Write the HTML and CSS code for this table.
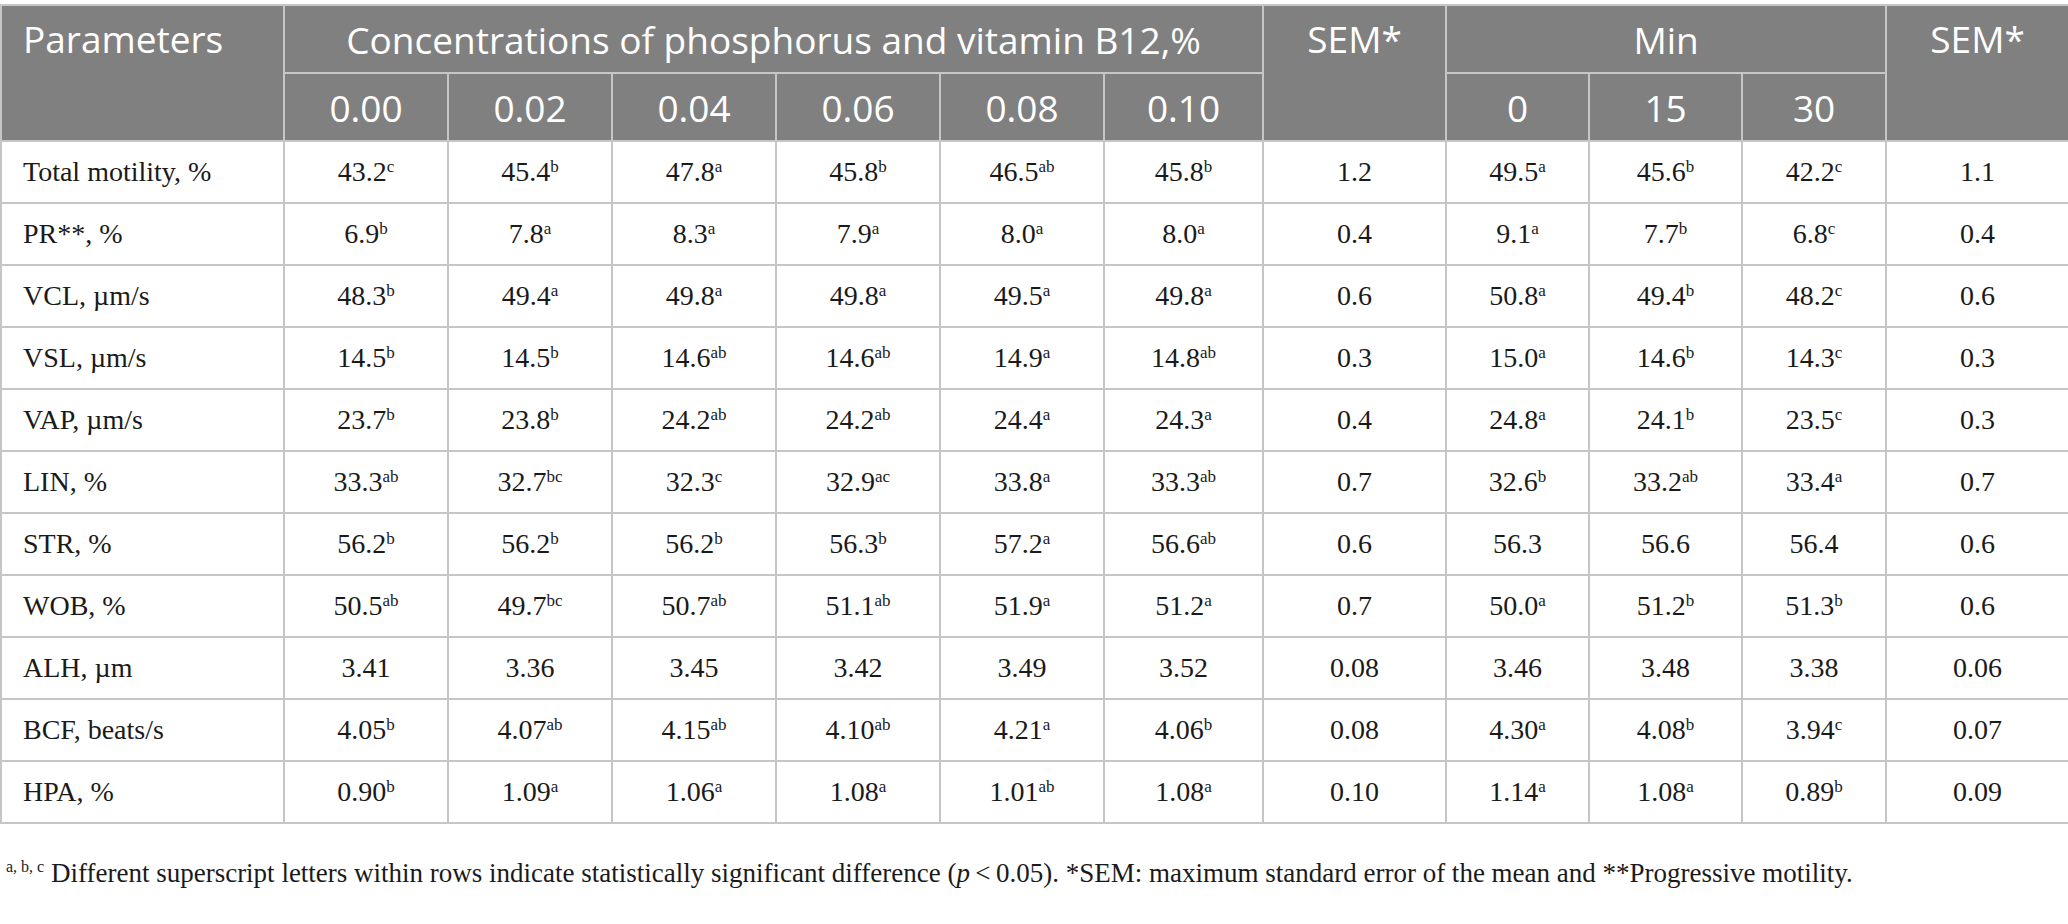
FILE: index.html
```html
<!DOCTYPE html>
<html lang="en">

<head>
    <meta charset="UTF-8">
    <meta name="viewport" content="width=device-width, initial-scale=1.0">
    <title>Sperm motility parameters</title>
    <link rel="stylesheet" href="styles.css">
</head>

<body>
    <table class="data">
        <colgroup>
            <col class="c-param">
            <col class="c-num"><col class="c-num"><col class="c-num">
            <col class="c-num"><col class="c-num"><col class="c-last">
            <col class="c-sem">
            <col class="c-m0"><col class="c-m15"><col class="c-m30">
            <col class="c-sem">
        </colgroup>
        <thead>
            <tr class="head-top">
                <th rowspan="2" class="left top">Parameters</th>
                <th colspan="6">Concentrations of phosphorus and vitamin B12,%</th>
                <th rowspan="2" class="top">SEM*</th>
                <th colspan="3">Min</th>
                <th rowspan="2" class="top">SEM*</th>
            </tr>
            <tr class="head-sub">
                <th>0.00</th>
                <th>0.02</th>
                <th>0.04</th>
                <th>0.06</th>
                <th>0.08</th>
                <th>0.10</th>
                <th>0</th>
                <th>15</th>
                <th>30</th>
            </tr>
        </thead>
        <tbody>
            <tr>
                <td class="left">Total motility, %</td>
                <td>43.2<sup>c</sup></td><td>45.4<sup>b</sup></td><td>47.8<sup>a</sup></td>
                <td>45.8<sup>b</sup></td><td>46.5<sup>ab</sup></td><td>45.8<sup>b</sup></td>
                <td>1.2</td>
                <td>49.5<sup>a</sup></td><td>45.6<sup>b</sup></td><td>42.2<sup>c</sup></td>
                <td>1.1</td>
            </tr>
            <tr>
                <td class="left">PR**, %</td>
                <td>6.9<sup>b</sup></td><td>7.8<sup>a</sup></td><td>8.3<sup>a</sup></td>
                <td>7.9<sup>a</sup></td><td>8.0<sup>a</sup></td><td>8.0<sup>a</sup></td>
                <td>0.4</td>
                <td>9.1<sup>a</sup></td><td>7.7<sup>b</sup></td><td>6.8<sup>c</sup></td>
                <td>0.4</td>
            </tr>
            <tr>
                <td class="left">VCL, µm/s</td>
                <td>48.3<sup>b</sup></td><td>49.4<sup>a</sup></td><td>49.8<sup>a</sup></td>
                <td>49.8<sup>a</sup></td><td>49.5<sup>a</sup></td><td>49.8<sup>a</sup></td>
                <td>0.6</td>
                <td>50.8<sup>a</sup></td><td>49.4<sup>b</sup></td><td>48.2<sup>c</sup></td>
                <td>0.6</td>
            </tr>
            <tr>
                <td class="left">VSL, µm/s</td>
                <td>14.5<sup>b</sup></td><td>14.5<sup>b</sup></td><td>14.6<sup>ab</sup></td>
                <td>14.6<sup>ab</sup></td><td>14.9<sup>a</sup></td><td>14.8<sup>ab</sup></td>
                <td>0.3</td>
                <td>15.0<sup>a</sup></td><td>14.6<sup>b</sup></td><td>14.3<sup>c</sup></td>
                <td>0.3</td>
            </tr>
            <tr>
                <td class="left">VAP, µm/s</td>
                <td>23.7<sup>b</sup></td><td>23.8<sup>b</sup></td><td>24.2<sup>ab</sup></td>
                <td>24.2<sup>ab</sup></td><td>24.4<sup>a</sup></td><td>24.3<sup>a</sup></td>
                <td>0.4</td>
                <td>24.8<sup>a</sup></td><td>24.1<sup>b</sup></td><td>23.5<sup>c</sup></td>
                <td>0.3</td>
            </tr>
            <tr>
                <td class="left">LIN, %</td>
                <td>33.3<sup>ab</sup></td><td>32.7<sup>bc</sup></td><td>32.3<sup>c</sup></td>
                <td>32.9<sup>ac</sup></td><td>33.8<sup>a</sup></td><td>33.3<sup>ab</sup></td>
                <td>0.7</td>
                <td>32.6<sup>b</sup></td><td>33.2<sup>ab</sup></td><td>33.4<sup>a</sup></td>
                <td>0.7</td>
            </tr>
            <tr>
                <td class="left">STR, %</td>
                <td>56.2<sup>b</sup></td><td>56.2<sup>b</sup></td><td>56.2<sup>b</sup></td>
                <td>56.3<sup>b</sup></td><td>57.2<sup>a</sup></td><td>56.6<sup>ab</sup></td>
                <td>0.6</td>
                <td>56.3</td><td>56.6</td><td>56.4</td>
                <td>0.6</td>
            </tr>
            <tr>
                <td class="left">WOB, %</td>
                <td>50.5<sup>ab</sup></td><td>49.7<sup>bc</sup></td><td>50.7<sup>ab</sup></td>
                <td>51.1<sup>ab</sup></td><td>51.9<sup>a</sup></td><td>51.2<sup>a</sup></td>
                <td>0.7</td>
                <td>50.0<sup>a</sup></td><td>51.2<sup>b</sup></td><td>51.3<sup>b</sup></td>
                <td>0.6</td>
            </tr>
            <tr>
                <td class="left">ALH, µm</td>
                <td>3.41</td><td>3.36</td><td>3.45</td>
                <td>3.42</td><td>3.49</td><td>3.52</td>
                <td>0.08</td>
                <td>3.46</td><td>3.48</td><td>3.38</td>
                <td>0.06</td>
            </tr>
            <tr>
                <td class="left">BCF, beats/s</td>
                <td>4.05<sup>b</sup></td><td>4.07<sup>ab</sup></td><td>4.15<sup>ab</sup></td>
                <td>4.10<sup>ab</sup></td><td>4.21<sup>a</sup></td><td>4.06<sup>b</sup></td>
                <td>0.08</td>
                <td>4.30<sup>a</sup></td><td>4.08<sup>b</sup></td><td>3.94<sup>c</sup></td>
                <td>0.07</td>
            </tr>
            <tr>
                <td class="left">HPA, %</td>
                <td>0.90<sup>b</sup></td><td>1.09<sup>a</sup></td><td>1.06<sup>a</sup></td>
                <td>1.08<sup>a</sup></td><td>1.01<sup>ab</sup></td><td>1.08<sup>a</sup></td>
                <td>0.10</td>
                <td>1.14<sup>a</sup></td><td>1.08<sup>a</sup></td><td>0.89<sup>b</sup></td>
                <td>0.09</td>
            </tr>
        </tbody>
    </table>

    <!-- table footnote -->
    <p class="note"><sup>a, b, c</sup> Different superscript letters within rows indicate statistically significant difference (<i>p</i>&#8201;&lt;&#8201;0.05). *SEM: maximum standard error of the mean and **Progressive motility.</p>
</body>

</html>
```

FILE: styles.css
```css
body {
    margin: 0;
    background-color: #ffffff;
    font-family: 'Liberation Serif', serif;
    color: #1a1a1a;
}

.data {
    width: 2068px;
    margin-top: 4px;
    border-collapse: collapse;
    table-layout: fixed;
}

.c-param { width: 283px; }
.c-num { width: 164px; }
.c-last { width: 159px; }
.c-sem { width: 183px; }
.c-m0 { width: 143px; }
.c-m15 { width: 153px; }
.c-m30 { width: 144px; }

.data th,
.data td {
    border: 2px solid #c6c6c6;
    padding: 0;
    text-align: center;
}

.data th {
    background-color: #808080;
    color: #ffffff;
    font-family: 'Open Sans', sans-serif;
    font-weight: 400;
    font-size: 37px;
}

.head-top {
    height: 68px;
}

.head-sub {
    height: 68px;
}

.data th.top {
    vertical-align: top;
    padding-top: 7px;
}

.data th.left,
.data td.left {
    text-align: left;
    padding-left: 21px;
}

.data tbody tr {
    height: 62px;
}

.data td {
    font-size: 28px;
    line-height: 30px;
}

.data td sup {
    font-size: 17px;
    line-height: 0;
    vertical-align: 9px;
}

.note {
    margin: 34px 0 0 6px;
    font-size: 27px;
}

.note sup {
    font-size: 16px;
    line-height: 0;
    vertical-align: 10px;
}
```
